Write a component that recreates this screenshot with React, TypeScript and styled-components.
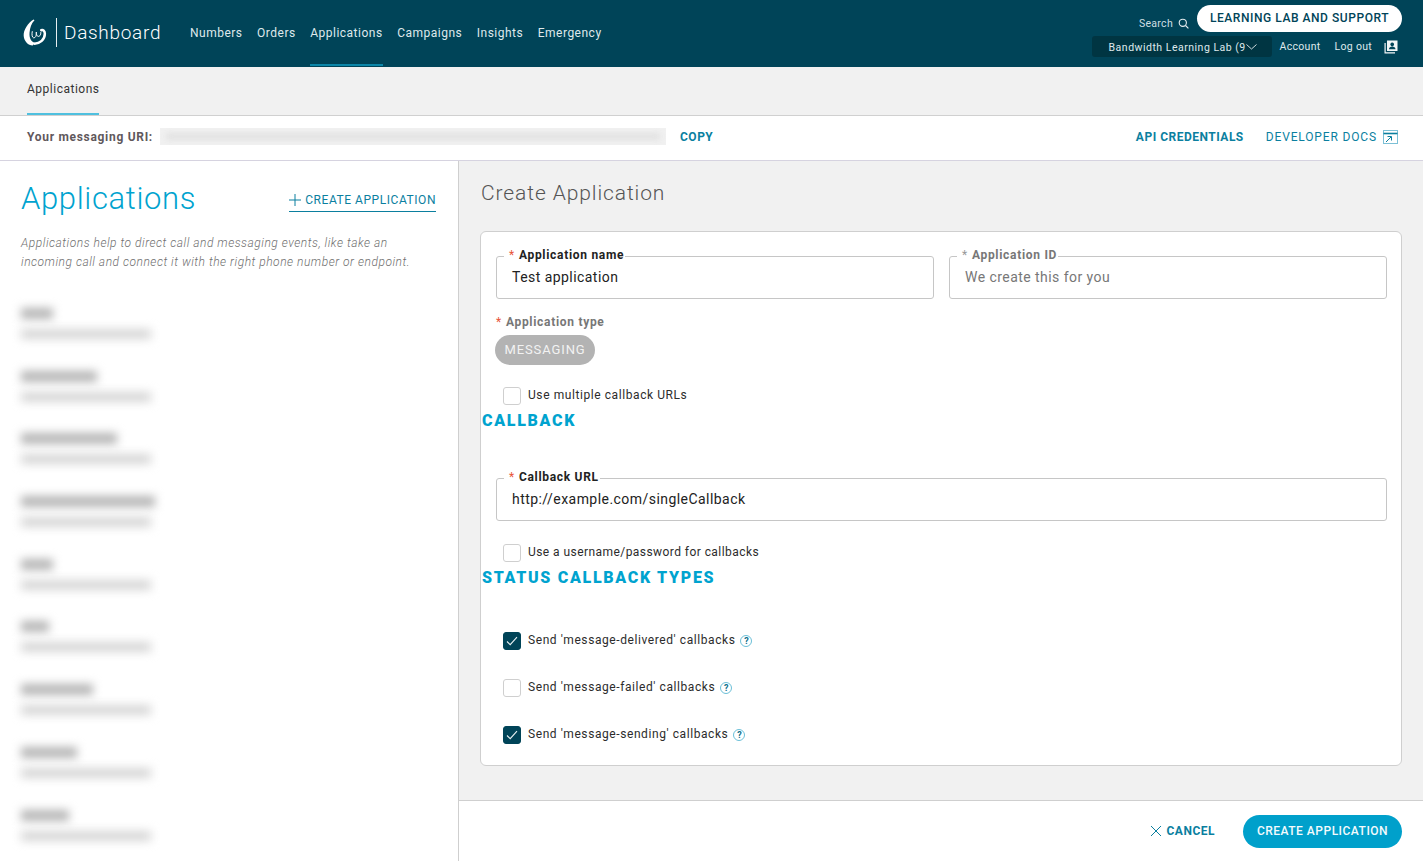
import styled, { createGlobalStyle } from 'styled-components'

const Global = createGlobalStyle`
	html, body { margin: 0; padding: 0; height: 100%; }
	body { font-family: Roboto, "Liberation Sans", sans-serif; color: #222; background: #fff; }
	#root { height: 100%; }
	* { box-sizing: border-box; }
`

const Page = styled.div`
	display: flex;
	flex-direction: column;
	width: 1423px;
	height: 861px;
	overflow: hidden;
`

const Header = styled.header`
	display: flex;
	justify-content: space-between;
	height: 67px;
	background: #004458;
	color: #fff;
	flex-shrink: 0;
`

const Brand = styled.div`
	display: flex;
	align-items: center;
	padding: 0 0 3px 22px;
	width: 190px;
	flex-shrink: 0;
`

const BrandDivider = styled.span`
	width: 1px;
	height: 29px;
	background: #e6eef0;
	margin: 0 7px 0 9px;
`

const BrandName = styled.span`
	font-size: 19px;
	font-weight: 300;
	letter-spacing: 0.7px;
`

const MainNav = styled.nav`
	display: flex;
	gap: 14.5px;
	flex: 1;
`

const MainNavItem = styled.a<{ $active?: boolean }>`
	display: flex;
	align-items: center;
	height: 66px;
	padding-top: 1px;
	font-size: 12px;
	letter-spacing: 0.5px;
	color: #dfe9ec;
	border-bottom: 2px solid ${p => (p.$active ? '#0b86a8' : 'transparent')};
`

const HeaderRight = styled.div`
	display: flex;
	flex-direction: column;
	align-items: flex-end;
	padding: 5px 21px 0 0;
`

const HeaderTop = styled.div`
	display: flex;
	align-items: center;
	gap: 8px;
`

const SearchLink = styled.span`
	display: flex;
	align-items: center;
	gap: 5px;
	font-size: 10.5px;
	letter-spacing: 0.3px;
	color: #cfdfe3;
	margin-top: 9px;
`

const SupportButton = styled.button`
	height: 27px;
	width: 205px;
	padding: 0 0 2px;
	border: none;
	border-radius: 14px;
	background: #fff;
	color: #004458;
	font: 500 12px Roboto, sans-serif;
	letter-spacing: 0.55px;
`

const HeaderBottom = styled.div`
	display: flex;
	align-items: center;
	margin-top: 4px;
	padding-right: 4px;
	font-size: 10.5px;
	letter-spacing: 0.3px;
	color: #dfe9ec;
`

const AccountSelect = styled.div`
	display: flex;
	align-items: center;
	width: 180px;
	height: 21px;
	padding: 1px 0 0 17px;
	border-radius: 3px;
	background: #003542;
	margin-right: 8px;
	white-space: nowrap;
	font-size: 10.5px;
	letter-spacing: 0.5px;
`

const AccountLink = styled.span<{ $last?: boolean }>`
	margin-right: ${p => (p.$last ? 12 : 14)}px;
`

const SubNav = styled.div`
	display: flex;
	height: 49px;
	padding-left: 27px;
	background: #f1f1f1;
	border-bottom: 1px solid #d0d0d0;
	flex-shrink: 0;
`

const SubNavItem = styled.a`
	display: flex;
	align-items: center;
	height: 48px;
	padding-bottom: 2px;
	font-size: 12px;
	letter-spacing: 0.5px;
	color: #333;
	border-bottom: 2px solid #4fc0df;
`

const UriBar = styled.div`
	display: flex;
	align-items: center;
	height: 45px;
	padding: 0 25px 3px 27px;
	background: #fff;
	border-bottom: 1px solid #d6d3e0;
	flex-shrink: 0;
`

const UriLabel = styled.span`
	font-size: 12px;
	font-weight: 700;
	letter-spacing: 0.7px;
	color: #5f585c;
	width: 133px;
	white-space: nowrap;
`

const UriMask = styled.div`
	position: relative;
	width: 506px;
	height: 17px;
	background: #f1f1f1;
	overflow: hidden;
	&::after {
		content: '';
		position: absolute;
		left: 6px;
		right: 6px;
		top: 6px;
		height: 5px;
		background: #dcdcdc;
		filter: blur(3px);
	}
`

const CopyLink = styled.a`
	margin-left: 14px;
	font-size: 12px;
	font-weight: 700;
	letter-spacing: 0.5px;
	color: #0b7f9f;
`

const UriActions = styled.div`
	display: flex;
	align-items: center;
	margin-left: auto;
`

const ActionLink = styled.a<{ $strong?: boolean }>`
	display: flex;
	align-items: center;
	gap: 6px;
	font-size: 12px;
	font-weight: ${p => (p.$strong ? 700 : 400)};
	letter-spacing: ${p => (p.$strong ? '0.5px' : '0.85px')};
	color: #0b7f9f;
	margin-left: 22px;
`

const Body = styled.div`
	display: flex;
	flex: 1;
	min-height: 0;
`

const Sidebar = styled.aside`
	width: 459px;
	flex-shrink: 0;
	padding: 0 22px 0 21px;
	background: #fff;
	border-right: 1px solid #cfcfcf;
	overflow: hidden;
`

const SidebarHead = styled.div`
	display: flex;
	justify-content: space-between;
	align-items: flex-start;
	padding-top: 19px;
`

const SidebarTitle = styled.h1`
	margin: 0;
	font-size: 31px;
	line-height: 38px;
	font-weight: 300;
	letter-spacing: 0.65px;
	color: #00a3cf;
`

const CreateLink = styled.a`
	display: flex;
	align-items: center;
	gap: 4px;
	height: 24px;
	margin-top: 8px;
	font-size: 12px;
	letter-spacing: 0.55px;
	color: #0b7f9f;
	border-bottom: 1px solid #0b7f9f;
`

const SidebarIntro = styled.p`
	margin: 16px 0 0;
	font-size: 12px;
	line-height: 19px;
	font-style: italic;
	font-weight: 300;
	letter-spacing: 0.52px;
	color: #6f6f6f;
	white-space: nowrap;
`

const AppList = styled.div`
	display: flex;
	flex-direction: column;
	gap: 21.7px;
	margin-top: 33px;
`

const AppRow = styled.div`
	display: flex;
	flex-direction: column;
	gap: 10px;
	height: 41px;
	padding-top: 3px;
`

const BlurName = styled.div<{ $w: number }>`
	width: ${p => p.$w}px;
	height: 11px;
	background: #b4b4b4;
	filter: blur(5px);
`

const BlurMeta = styled.div`
	width: 130px;
	height: 10px;
	background: #d6d6d6;
	filter: blur(5px);
`

const Main = styled.main`
	display: flex;
	flex-direction: column;
	flex: 1;
	min-width: 0;
	background: #f1f1f1;
`

const MainScroll = styled.div`
	flex: 1;
	padding: 18px 21px 0;
`

const MainTitle = styled.h2`
	margin: 0 0 23px 1px;
	font-size: 21px;
	line-height: 29px;
	font-weight: 300;
	letter-spacing: 0.9px;
	color: #555;
`

const Card = styled.section`
	height: 535px;
	padding: 24px 14px 0 15px;
	background: #fff;
	border: 1px solid #cfcfcf;
	border-radius: 6px;
`

const FieldRow = styled.div`
	display: flex;
	gap: 15px;
`

const Fieldset = styled.div<{ $muted?: boolean }>`
	position: relative;
	flex: 1;
	height: 43px;
	display: flex;
	align-items: center;
	padding: 0 0 2px 15px;
	border: 1px solid #c6c6c6;
	border-radius: 3px;
	font-size: 14px;
	letter-spacing: 0.45px;
	color: ${p => (p.$muted ? '#777' : '#222')};
`

const FloatLabel = styled.label<{ $muted?: boolean }>`
	position: absolute;
	left: 7px;
	top: -9px;
	padding: 0 1px 0 5px;
	background: #fff;
	font-size: 12px;
	line-height: 14px;
	font-weight: 700;
	letter-spacing: 0.7px;
	color: ${p => (p.$muted ? '#777' : '#222')};
`

const Star = styled.span<{ $muted?: boolean }>`
	color: ${p => (p.$muted ? '#999' : '#e8553a')};
	margin-right: 4px;
	font-weight: 400;
`

const TypeLabel = styled.div`
	margin-top: 16px;
	font-size: 12px;
	line-height: 14px;
	font-weight: 700;
	letter-spacing: 0.7px;
	color: #777;
`

const Pill = styled.div`
	display: inline-flex;
	align-items: center;
	justify-content: center;
	width: 100px;
	height: 30px;
	margin: 6px 0 0 -1px;
	padding-bottom: 2px;
	border-radius: 15px;
	background: #b3b3b3;
	color: #f2f2f2;
	font-size: 13px;
	letter-spacing: 0.9px;
`

const CheckRow = styled.div<{ $tight?: boolean }>`
	display: flex;
	align-items: center;
	gap: 7px;
	height: 18px;
	padding-left: 7px;
	font-size: 12px;
	letter-spacing: ${p => (p.$tight ? '0.44px' : '0.58px')};
	color: #2c2c2c;
`

const CheckText = styled.span`
	padding-bottom: 3px;
`

const Box = styled.span<{ $checked?: boolean }>`
	display: flex;
	align-items: center;
	justify-content: center;
	width: 18px;
	height: 18px;
	border-radius: 3px;
	border: 1px solid ${p => (p.$checked ? '#004458' : '#cfcfcf')};
	background: ${p => (p.$checked ? '#004458' : '#fff')};
`

const Help = styled.span`
	display: inline-flex;
	align-items: center;
	justify-content: center;
	width: 12px;
	height: 12px;
	margin-left: -2px;
	border: 1px solid #6cc0d8;
	border-radius: 50%;
	font-size: 9px;
	font-weight: 700;
	letter-spacing: 0;
	color: #0b6f8c;
`

const SectionTitle = styled.h3`
	margin: 0 0 0 -14px;
	font-size: 16px;
	line-height: 18px;
	font-weight: 900;
	letter-spacing: 1.7px;
	color: #00a3cf;
`

const Footer = styled.footer`
	display: flex;
	justify-content: flex-end;
	align-items: center;
	gap: 28px;
	height: 61px;
	padding-right: 21px;
	background: #fff;
	border-top: 1px solid #cfcfcf;
	flex-shrink: 0;
`

const CancelLink = styled.a`
	display: flex;
	align-items: center;
	gap: 5px;
	font-size: 12px;
	font-weight: 700;
	letter-spacing: 0.5px;
	color: #0b7f9f;
`

const PrimaryButton = styled.button`
	width: 159px;
	height: 33px;
	border: none;
	border-radius: 17px;
	background: #00a0cb;
	color: #f4fbfd;
	font: 500 12px Roboto, sans-serif;
	letter-spacing: 0.5px;
`

const Spacer = styled.div<{ $h: number }>`
	height: ${p => p.$h}px;
`

const Logo = () => (
	<svg width="25" height="27" viewBox="0 0 26 30" fill="none">
		<path d="M12 0.5 C6 4 0.5 12 1 19 C1.5 25 6 29.5 11 29.5 L13.5 26.5 C9 25 7 21 7.5 15 C8 10 9.5 5 13 1.5 Z" fill="#fff" />
		<path d="M10.5 14 C9.5 19 11 22 13.5 20.5 C15 19.5 15 17 15 15 M15 15 C15 19 17 20.5 19 18.5 C20 17.5 20 16 20 15" stroke="#fff" strokeWidth="1.1" strokeLinecap="round" />
		<path d="M13 27.5 C19 27 24.5 23 24.5 16.5 C24.5 13.5 22.5 11.5 20.5 12.5" stroke="#fff" strokeWidth="2.8" strokeLinecap="round" />
	</svg>
)

const SearchIcon = () => (
	<svg width="11" height="11" viewBox="0 0 11 11" fill="none" stroke="#e6eef0" strokeWidth="1.1">
		<circle cx="4.8" cy="4.8" r="3.6" />
		<path d="M7.5 7.5 L10.4 10.4" />
	</svg>
)

const Chevron = () => (
	<svg width="11" height="6" viewBox="0 0 11 6" fill="none" stroke="#e6eef0" strokeWidth="0.9">
		<path d="M0.5 0.5 L5.5 5 L10.5 0.5" />
	</svg>
)

const ContactsIcon = () => (
	<svg width="14" height="14" viewBox="0 0 14 14" fill="#f2f6f7">
		<path d="M3 0.5 H13.5 V11 H3 Z M8.2 2.5 a1.9 1.9 0 1 0 0.01 0 Z M5 9.2 H11.5 C11.5 7.4 10 6.6 8.2 6.6 C6.5 6.6 5 7.4 5 9.2 Z" fillRule="evenodd" />
		<path d="M0.5 3 H1.7 V12.3 H11 V13.5 H0.5 Z" />
	</svg>
)

const DocsIcon = () => (
	<svg width="15" height="14" viewBox="0 0 15 14" fill="none" stroke="#0b7f9f" strokeWidth="1">
		<rect x="0.5" y="0.5" width="14" height="13" stroke="#7cc0d6" />
		<path d="M0.5 3.5 H14.5" strokeWidth="1.6" />
		<path d="M3 12 L8 7 M4.5 6.5 H8.5 V10.5" />
	</svg>
)

const PlusIcon = () => (
	<svg width="12" height="12" viewBox="0 0 12 12" stroke="#0b7f9f" strokeWidth="1">
		<path d="M6 0 V12 M0 6 H12" />
	</svg>
)

const CloseIcon = () => (
	<svg width="12" height="12" viewBox="0 0 12 12" stroke="#0b7f9f" strokeWidth="1">
		<path d="M1 1 L11 11 M11 1 L1 11" />
	</svg>
)

const CheckMark = () => (
	<svg width="12" height="10" viewBox="0 0 12 10" fill="none" stroke="#e8f2f4" strokeWidth="1.1">
		<path d="M1 5.5 L4.2 8.6 L11 1.2" />
	</svg>
)

const nav = ['Numbers', 'Orders', 'Applications', 'Campaigns', 'Insights', 'Emergency']
const blurWidths = [32, 76, 96, 134, 32, 28, 72, 56, 48]

export default function App() {
	return (
		<Page>
			<Global />
			<Header>
				<Brand>
					<Logo />
					<BrandDivider />
					<BrandName>Dashboard</BrandName>
				</Brand>
				<MainNav>
					{nav.map(n => (
						<MainNavItem key={n} $active={n === 'Applications'}>{n}</MainNavItem>
					))}
				</MainNav>
				<HeaderRight>
					<HeaderTop>
						<SearchLink>Search <SearchIcon /></SearchLink>
						<SupportButton>LEARNING LAB AND SUPPORT</SupportButton>
					</HeaderTop>
					<HeaderBottom>
						<AccountSelect>Bandwidth Learning Lab (9<Chevron /></AccountSelect>
						<AccountLink>Account</AccountLink>
						<AccountLink $last>Log out</AccountLink>
						<ContactsIcon />
					</HeaderBottom>
				</HeaderRight>
			</Header>
			<SubNav>
				<SubNavItem>Applications</SubNavItem>
			</SubNav>
			<UriBar>
				<UriLabel>Your messaging URI:</UriLabel>
				<UriMask />
				<CopyLink>COPY</CopyLink>
				<UriActions>
					<ActionLink $strong>API CREDENTIALS</ActionLink>
					<ActionLink>DEVELOPER DOCS <DocsIcon /></ActionLink>
				</UriActions>
			</UriBar>
			<Body>
				<Sidebar>
					<SidebarHead>
						<SidebarTitle>Applications</SidebarTitle>
						<CreateLink><PlusIcon />CREATE APPLICATION</CreateLink>
					</SidebarHead>
					<SidebarIntro>
						Applications help to direct call and messaging events, like take an<br />
						incoming call and connect it with the right phone number or endpoint.
					</SidebarIntro>
					<AppList>
						{blurWidths.map((w, i) => (
							<AppRow key={i}>
								<BlurName $w={w} />
								<BlurMeta />
							</AppRow>
						))}
					</AppList>
				</Sidebar>
				<Main>
					<MainScroll>
						<MainTitle>Create Application</MainTitle>
						<Card>
							<FieldRow>
								<Fieldset>
									<FloatLabel><Star>*</Star>Application name</FloatLabel>
									Test application
								</Fieldset>
								<Fieldset $muted>
									<FloatLabel $muted><Star $muted>*</Star>Application ID</FloatLabel>
									We create this for you
								</Fieldset>
							</FieldRow>
							<TypeLabel><Star>*</Star>Application type</TypeLabel>
							<Pill>MESSAGING</Pill>
							<Spacer $h={22} />
							<CheckRow><Box /><CheckText>Use multiple callback URLs</CheckText></CheckRow>
							<Spacer $h={7} />
							<SectionTitle>CALLBACK</SectionTitle>
							<Spacer $h={48} />
							<Fieldset>
								<FloatLabel><Star>*</Star>Callback URL</FloatLabel>
								http://example.com/singleCallback
							</Fieldset>
							<Spacer $h={23} />
							<CheckRow $tight><Box /><CheckText>Use a username/password for callbacks</CheckText></CheckRow>
							<Spacer $h={7} />
							<SectionTitle>STATUS CALLBACK TYPES</SectionTitle>
							<Spacer $h={45} />
							<CheckRow><Box $checked><CheckMark /></Box><CheckText>Send 'message-delivered' callbacks</CheckText><Help>?</Help></CheckRow>
							<Spacer $h={29} />
							<CheckRow><Box /><CheckText>Send 'message-failed' callbacks</CheckText><Help>?</Help></CheckRow>
							<Spacer $h={29} />
							<CheckRow><Box $checked><CheckMark /></Box><CheckText>Send 'message-sending' callbacks</CheckText><Help>?</Help></CheckRow>
						</Card>
					</MainScroll>
					<Footer>
						<CancelLink><CloseIcon />CANCEL</CancelLink>
						<PrimaryButton>CREATE APPLICATION</PrimaryButton>
					</Footer>
				</Main>
			</Body>
		</Page>
	)
}
